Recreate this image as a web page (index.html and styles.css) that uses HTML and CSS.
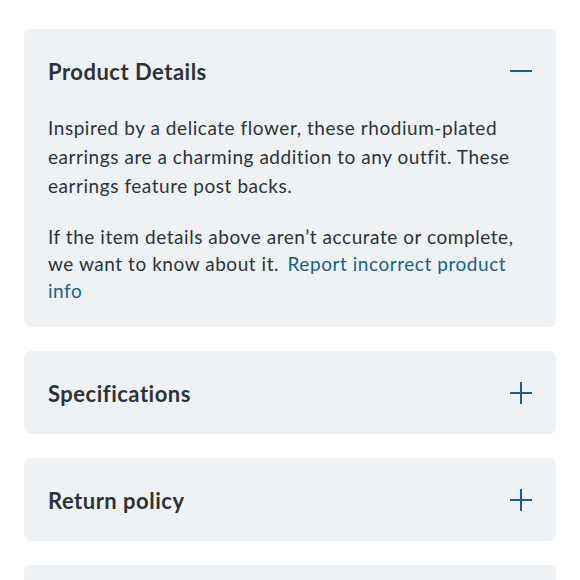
FILE: index.html
```html
<!DOCTYPE html>
<html lang="en">
<head>
<meta charset="utf-8">
<title>Product Details</title>
<link rel="stylesheet" href="styles.css">
</head>
<body>
<main class="accordion">
  <section class="card">
    <div class="card-header">
      <h2 class="card-title">Product Details</h2>
      <svg class="icon" width="22" height="22" viewBox="0 0 22 22" aria-hidden="true"><path d="M0 11H22" /></svg>
    </div>
    <div class="card-body">
      <p class="para">Inspired by a delicate flower, these rhodium-plated earrings are a charming addition to any outfit. These earrings feature post backs.</p>
      <p class="para para-note">If the item details above aren’t accurate or complete, we want to know about it. <a class="link" href="#">Report incorrect product info</a></p>
    </div>
  </section>
  <section class="card">
    <div class="card-header">
      <h2 class="card-title">Specifications</h2>
      <svg class="icon" width="22" height="22" viewBox="0 0 22 22" aria-hidden="true"><path d="M0 11H22M11 0V22" /></svg>
    </div>
  </section>
  <section class="card">
    <div class="card-header">
      <h2 class="card-title">Return policy</h2>
      <svg class="icon" width="22" height="22" viewBox="0 0 22 22" aria-hidden="true"><path d="M0 11H22M11 0V22" /></svg>
    </div>
  </section>
  <section class="card">
    <div class="card-header">
      <h2 class="card-title">Shipping</h2>
      <svg class="icon" width="22" height="22" viewBox="0 0 22 22" aria-hidden="true"><path d="M0 11H22M11 0V22" /></svg>
    </div>
  </section>
</main>
</body>
</html>
```
FILE: styles.css
```css
html, body {
  margin: 0;
  padding: 0;
  background: #ffffff;
}
body {
  font-family: Lato, "Open Sans", Arial, sans-serif;
  color: #2e3236;
}
.accordion {
  display: flex;
  flex-direction: column;
  gap: 24px;
  padding: 29px 24px 0;
}
.card {
  background: #eff2f5;
  border-radius: 7px;
}
.card-header {
  height: 83px;
  padding: 0 24px;
  display: flex;
  align-items: center;
  justify-content: space-between;
}
.card-title {
  margin: 0;
  padding-top: 3px;
  font-size: 22px;
  font-weight: 700;
  letter-spacing: 0.5px;
  color: #2e3236;
  line-height: 1.2;
}
.icon {
  display: block;
  stroke: #1b5e8c;
  stroke-width: 2;
  fill: none;
}
.card-body {
  padding: 1px 24px 23px;
}
.para {
  margin: 0;
  font-size: 19px;
  line-height: 29px;
  letter-spacing: 0.55px;
}
.para-note {
  margin-top: 23px;
  line-height: 27px;
}
.link {
  color: #16608f;
  text-decoration: none;
  margin-left: 3px;
}
```
